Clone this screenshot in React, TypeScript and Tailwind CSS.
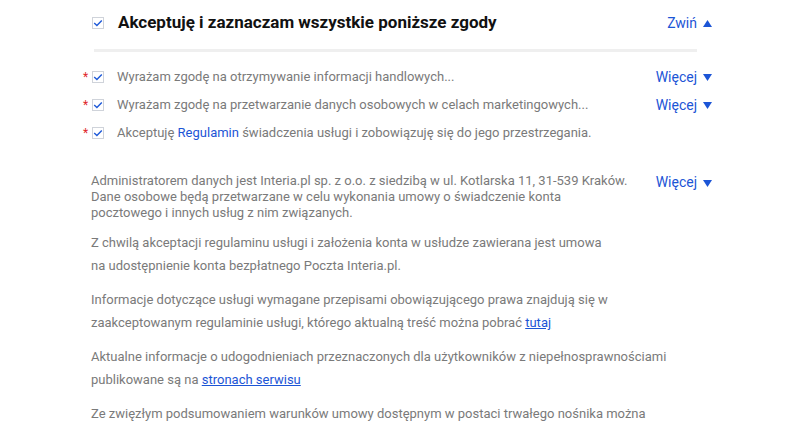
import React from "react";

const font = { fontFamily: "Roboto, 'Noto Sans', sans-serif" };

function Box() {
  return (
    <span className="flex h-[12px] w-[12px] shrink-0 items-center justify-center border border-[#cfd3da] bg-white">
      <svg width="10" height="8" viewBox="0 0 10 8" fill="none">
        <path d="M1.2 4.1 L3.9 6.6 L8.8 1.4" stroke="#1f5ad8" strokeWidth="1.4" />
      </svg>
    </span>
  );
}

function More({ label = "Więcej", up = false }: { label?: string; up?: boolean }) {
  return (
    <button className="flex items-center gap-[6px] text-[14px] text-[#1c55d6]">
      <span>{label}</span>
      <svg width="9" height="7" viewBox="0 0 9 7" className="mt-[1px]">
        <path d={up ? "M0 7 L4.5 0 L9 7 Z" : "M0 0 L9 0 L4.5 7 Z"} fill="#1c55d6" />
      </svg>
    </button>
  );
}

const consents = [
  { text: "Wyrażam zgodę na otrzymywanie informacji handlowych...", more: true },
  { text: "Wyrażam zgodę na przetwarzanie danych osobowych w celach marketingowych...", more: true },
  { text: "regulamin", more: false },
];

export default function App() {
  return (
    <div className="min-h-screen bg-white" style={font}>
      <div className="ml-[83px] w-[629px]">
        {/* header: accept all */}
        <div className="flex h-[46px] items-center">
          <span className="ml-[9px]">
            <Box />
          </span>
          <h2 className="ml-[14px] flex-1 text-[17px] font-bold text-[#111]">
            Akceptuję i zaznaczam wszystkie poniższe zgody
          </h2>
          <More label="Zwiń" up />
        </div>
        <div className="ml-[11px] mt-[3px] h-[3px] w-[603px] bg-[#efefef]" />

        {/* single consents */}
        <div className="mt-[11px]">
          {consents.map((c, i) => (
            <div key={i} className="flex h-[28px] items-center">
              <span className="w-[9px] text-[12px] leading-none text-[#e0262b]">*</span>
              <Box />
              <p className="ml-[13px] flex-1 text-[13px] text-[#7a7a7a]">
                {c.text === "regulamin" ? (
                  <>
                    Akceptuję <span className="text-[#1c55d6]">Regulamin</span> świadczenia usługi i zobowiązuję się do jego przestrzegania.
                  </>
                ) : (
                  c.text
                )}
              </p>
              {c.more && <More />}
            </div>
          ))}
        </div>

        {/* administrator info */}
        <div className="ml-[8px] mt-[26px] text-[13px] text-[#7a7a7a]">
          <div className="flex items-start">
            <p className="flex-1 whitespace-nowrap leading-[16px]">
              Administratorem danych jest Interia.pl sp. z o.o. z siedzibą w ul. Kotlarska 11, 31-539 Kraków.
              <br />
              Dane osobowe będą przetwarzane w celu wykonania umowy o świadczenie konta
              <br />
              pocztowego i innych usług z nim związanych.
            </p>
            <div className="-mt-[1px]">
              <More />
            </div>
          </div>

          <p className="mt-[10px] whitespace-nowrap leading-[23px]">
            Z chwilą akceptacji regulaminu usługi i założenia konta w usłudze zawierana jest umowa
            <br />
            na udostępnienie konta bezpłatnego Poczta Interia.pl.
          </p>

          <p className="mt-[11px] whitespace-nowrap leading-[23px]">
            Informacje dotyczące usługi wymagane przepisami obowiązującego prawa znajdują się w
            <br />
            zaakceptowanym regulaminie usługi, którego aktualną treść można pobrać{" "}
            <a href="#" className="text-[#1c55d6] underline">
              tutaj
            </a>
          </p>

          <p className="mt-[11px] whitespace-nowrap leading-[23px]">
            Aktualne informacje o udogodnieniach przeznaczonych dla użytkowników z niepełnosprawnościami
            <br />
            publikowane są na{" "}
            <a href="#" className="text-[#1c55d6] underline">
              stronach serwisu
            </a>
          </p>

          <p className="mt-[11px] whitespace-nowrap leading-[23px]">
            Ze zwięzłym podsumowaniem warunków umowy dostępnym w postaci trwałego nośnika można
          </p>
        </div>
      </div>
    </div>
  );
}
